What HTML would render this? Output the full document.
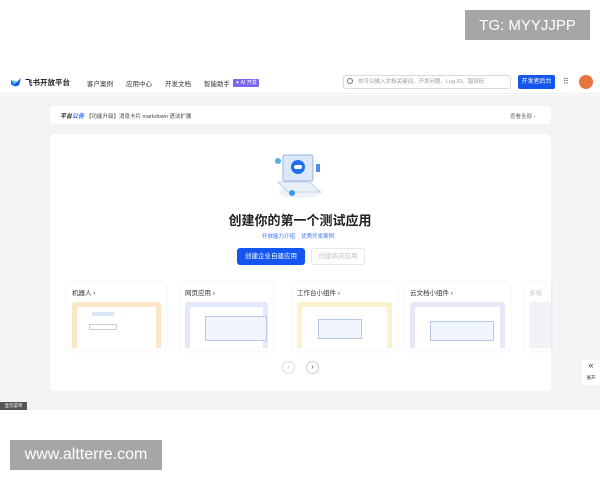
<!DOCTYPE html>
<html><head><meta charset="utf-8"><style>
*{margin:0;padding:0;box-sizing:border-box}
body{width:600px;height:480px;background:#fff;position:relative;overflow:hidden;font-family:"Liberation Sans","Noto Sans CJK SC",sans-serif;color:#1f2329}
.a{position:absolute}
.wm{background:#a6a6a6;color:#fff;font-family:"Liberation Sans",sans-serif;display:flex;align-items:center;justify-content:center}
.card{position:absolute;top:282px;height:69px;background:#fff;border-radius:5px;box-shadow:0 0 3px rgba(0,0,0,.08)}
.card .t{position:absolute;left:5px;top:5px;font-size:6.5px;color:#333}
.card .p{position:absolute;left:5px;right:5px;top:20px;bottom:3px;border-radius:3px 3px 0 0}
.card .in{position:absolute;left:5px;right:5px;top:5px;bottom:0;background:#fff;border-radius:2px 2px 0 0}
</style></head><body>
<div class="a wm" style="left:465px;top:10px;width:125px;height:30px;font-size:15px">TG: MYYJJPP</div>
<div class="a" style="left:0;top:60px;width:600px;height:34px;background:#fff;border-bottom:1px solid #eceef0"></div>
<svg class="a" style="left:10px;top:76px" width="12" height="12" viewBox="0 0 12 12"><path d="M1 4 L7 6 L11 2 L9 9 Q5 12 1 8Z" fill="#1456f0"/><path d="M1 4 L7 6 L4 9Z" fill="#3ec7d8"/></svg>
<div class="a" style="left:25px;top:77px;font-size:7.5px;font-weight:bold">飞书开放平台</div>
<div class="a" style="left:87px;top:78px;font-size:6.5px;color:#333">客户案例</div>
<div class="a" style="left:126px;top:78px;font-size:6.5px;color:#333">应用中心</div>
<div class="a" style="left:165px;top:78px;font-size:6.5px;color:#333">开发文档</div>
<div class="a" style="left:204px;top:78px;font-size:6.5px;color:#333">智能助手</div>
<div class="a" style="left:233px;top:79px;width:26px;height:8px;background:#7b67ee;color:#fff;font-size:5px;border-radius:1px;text-align:center;line-height:8px">✦ AI 开发</div>
<div class="a" style="left:343px;top:75px;width:168px;height:14px;border:1px solid #d8dade;border-radius:3px;font-size:5.5px;color:#999;line-height:12px;padding-left:14px">你可以输入文档关键词、开发问题、Log ID、错误码</div>
<div class="a" style="left:347px;top:78px;width:6px;height:6px;border:1px solid #777;border-radius:50%"></div>
<div class="a" style="left:518px;top:75px;width:37px;height:14px;background:#1456f0;color:#fff;font-size:6px;border-radius:2px;text-align:center;line-height:14px">开发者后台</div>
<div class="a" style="left:563px;top:78px;font-size:8px;color:#555;line-height:8px">⠿</div>
<div class="a" style="left:579px;top:75px;width:14px;height:14px;border-radius:50%;background:#e8743f"></div>
<div class="a" style="left:0;top:95px;width:600px;height:315px;background:#f2f3f5"></div>
<div class="a" style="left:50px;top:106px;width:501px;height:18px;background:#fff;border-radius:3px"></div>
<div class="a" style="left:60px;top:111px;font-size:6px;font-weight:bold;font-style:italic">平台<span style="color:#3370ff">公告</span></div>
<div class="a" style="left:86px;top:112px;font-size:5.5px;color:#444">【功能升级】消息卡片 markdown 语法扩展</div>
<div class="a" style="left:510px;top:112px;font-size:5.5px;color:#666">查看全部 ›</div>
<div class="a" style="left:50px;top:134px;width:501px;height:257px;background:#fff;border-radius:4px"></div>
<svg class="a" style="left:270px;top:152px" width="60" height="50" viewBox="0 0 60 50"><ellipse cx="30" cy="40" rx="22" ry="6" fill="#eef3fb"/><rect x="13" y="3" width="30" height="26" rx="2" fill="#dce8fa" stroke="#9ab4dc" stroke-width="1"/><path d="M8 30 L40 30 L50 40 L18 40Z" fill="#eaf0f8" stroke="#b8c8e0" stroke-width="0.8"/><circle cx="28" cy="15" r="7" fill="#1f70e8"/><rect x="24" y="13" width="8" height="4" rx="2" fill="#fff"/><circle cx="8" cy="9" r="3" fill="#5aaee8"/><rect x="46" y="12" width="4" height="8" fill="#4a90e8"/><circle cx="22" cy="41" r="3" fill="#3a9ae8"/></svg>
<div class="a" style="left:0;width:600px;top:210px;text-align:center;font-size:13px;font-weight:bold;color:#222">创建你的第一个测试应用</div>
<div class="a" style="left:262px;top:232px;font-size:5.5px;color:#3370ff">开放能力介绍&nbsp;&nbsp;&nbsp;&nbsp;优秀开发案例</div>
<div class="a" style="left:237px;top:248px;width:68px;height:17px;background:#1456f0;color:#fff;font-size:6.5px;border-radius:3px;text-align:center;line-height:17px">创建企业自建应用</div>
<div class="a" style="left:311px;top:248px;width:54px;height:17px;border:1px solid #e5e6eb;color:#c0c3c8;font-size:6.5px;border-radius:3px;text-align:center;line-height:15px">创建商店应用</div>
<div class="card" style="left:67px;width:99px"><div class="t">机器人 ›</div><div class="p" style="background:#fbe7c8"><div class="in"><div class="a" style="left:15px;top:5px;width:22px;height:4px;background:#dbe6fb"></div><div class="a" style="left:12px;top:17px;width:28px;height:6px;border:1px solid #ccc"></div></div></div></div>
<div class="card" style="left:180px;width:93px"><div class="t">网页应用 ›</div><div class="p" style="background:#e2e9fa"><div class="in"><div class="a" style="left:15px;top:9px;width:62px;height:25px;border:1px solid #b8c6e8;background:#f1f5fd"></div></div></div></div>
<div class="card" style="left:292px;width:105px"><div class="t">工作台小组件 ›</div><div class="p" style="background:#fbf2cc"><div class="in"><div class="a" style="left:16px;top:12px;width:44px;height:20px;border:1px solid #b8c6e8;background:#f1f5fd"></div></div></div></div>
<div class="card" style="left:405px;width:105px"><div class="t">云文档小组件 ›</div><div class="p" style="background:#e6e8f8"><div class="in"><div class="a" style="left:15px;top:14px;width:64px;height:20px;border:1px solid #b8c6e8;background:#f1f5fd"></div></div></div></div>
<div class="card" style="left:524px;width:27px;border-radius:5px 0 0 5px"><div class="t" style="color:#ccc">多维</div><div class="p" style="background:#f1f1f8;right:0"></div></div>
<div class="a" style="left:282px;top:361px;width:13px;height:13px;border:1px solid #ddd;border-radius:50%;font-size:7px;color:#bbb;text-align:center;line-height:11px">‹</div>
<div class="a" style="left:306px;top:361px;width:13px;height:13px;border:1px solid #ccc;border-radius:50%;font-size:7px;color:#333;text-align:center;line-height:11px">›</div>
<div class="a" style="left:582px;top:360px;width:18px;height:25px;background:#fff;border-radius:3px 0 0 3px;text-align:center;font-size:9px;line-height:11px;color:#333">«<br><span style="font-size:4.5px">展开</span></div>
<div class="a" style="left:0;top:402px;width:27px;height:8px;background:#555;color:#fff;font-size:4.5px;text-align:center;line-height:8px">显示菜单</div>
<div class="a wm" style="left:10px;top:440px;width:152px;height:30px;font-size:16px">www.altterre.com</div>
</body></html>
